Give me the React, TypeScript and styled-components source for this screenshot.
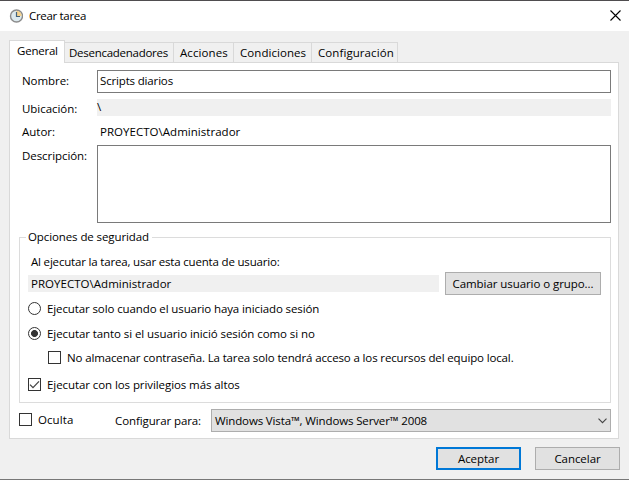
import React from 'react';
import styled, { createGlobalStyle } from 'styled-components';

const GlobalStyle = createGlobalStyle`
  * { box-sizing: border-box; }
  body {
    margin: 0;
    overflow: hidden;
    color: #000;
    background: #f0f0f0;
    font: 11.5px/16px "Open Sans", "Noto Sans", sans-serif;
  }
`;

const Window = styled.div`
  width: 629px;
  height: 480px;
  display: flex;
  flex-direction: column;
  background: #f0f0f0;
  border-top: 1px solid #4f4d4f;
  border-bottom: 1px solid #777;
`;

const TitleBar = styled.header`
  height: 30px;
  padding: 0 8px 0 9px;
  display: flex;
  align-items: center;
  gap: 6px;
  background: #fff;
`;

const CloseButton = styled.div`
  margin-left: auto;
  width: 11px;
  height: 11px;
  display: flex;
  margin-bottom: 2px;
`;

const Text = styled.span<{ $track?: number }>`
  white-space: pre;
  letter-spacing: ${({ $track = 0 }) => $track}px;
`;

const TabStrip = styled.nav`
  height: 22px;
  margin: 9px 10px 0 9px;
  display: flex;
  align-items: flex-end;
`;

const Tab = styled.div<{ $width: number; $inset: number; $active?: boolean }>`
  width: ${({ $width }) => $width}px;
  height: ${({ $active }) => ($active ? 23 : 20)}px;
  margin-bottom: ${({ $active }) => ($active ? -1 : 0)}px;
  padding: 2px 0 0 ${({ $inset }) => $inset}px;
  position: relative;
  border: 1px solid #d9d9d9;
  border-bottom: 0;
  border-left-width: ${({ $active }) => ($active ? 1 : 0)}px;
  background: ${({ $active }) => ($active ? '#fff' : '#f0f0f0')};
`;

const Panel = styled.main`
  height: 377px;
  margin: 0 10px 0 9px;
  padding: 7px 7px 0 9px;
  border: 1px solid #d9d9d9;
  background: #fff;
`;

const Field = styled.div<{ $height: number; $gap?: number }>`
  display: grid;
  grid-template-columns: 78px 1fr;
  height: ${({ $height }) => $height}px;
  margin-top: ${({ $gap = 0 }) => $gap}px;
`;

const Label = styled.label<{ $top: number }>`
  padding: ${({ $top }) => $top}px 0 0 3px;
  height: 16px;
`;

const TextBox = styled.div`
  padding: 2px 0 0 2px;
  border: 1px solid #7a7a7a;
  background: #fff;
`;

const ReadOnly = styled.div<{ $inset: number; $top?: number }>`
  height: 17px;
  padding: ${({ $top = 0 }) => $top}px 0 0 ${({ $inset }) => $inset}px;
  background: #f0f0f0;
`;

const Plain = styled.div`
  padding-left: 3px;
`;

const Group = styled.section`
  height: 166px;
  margin-top: 14px;
  padding: 0 9px 0 8px;
  border: 1px solid #dcdcdc;
`;

const Legend = styled.div`
  width: 126px;
  height: 16px;
  margin: -9px 0 0 -2px;
  padding-left: 2px;
  background: #fff;
`;

const Prompt = styled.div`
  margin-top: 9px;
  padding-left: 3px;
`;

const AccountRow = styled.div`
  height: 23px;
  margin-top: 2px;
  display: grid;
  grid-template-columns: 411px 156px;
  column-gap: 6px;
  align-items: center;
`;

const Button = styled.button<{ $primary?: boolean }>`
  height: 23px;
  padding: 0;
  font: inherit;
  color: inherit;
  background: #e1e1e1;
  border: ${({ $primary }) => ($primary ? '2px solid #0078d7' : '1px solid #adadad')};
`;

const Option = styled.div<{ $gap: number; $indent?: number }>`
  height: 17px;
  margin: ${({ $gap, $indent = 0 }) => `${$gap}px 0 0 ${$indent}px`};
  display: flex;
  align-items: center;
  gap: 6px;
`;

const RadioMark = styled.span<{ $on?: boolean }>`
  width: 13px;
  height: 13px;
  flex: none;
  border: 1px solid #333;
  border-radius: 50%;
  background: ${({ $on }) => ($on ? 'radial-gradient(circle, #333 3.1px, #fff 3.8px)' : '#fff')};
`;

const CheckMark = styled.span`
  width: 13px;
  height: 13px;
  flex: none;
  display: flex;
  border: 1px solid #333;
  background: #fff;
`;

const BottomRow = styled.div`
  height: 23px;
  margin-top: 6px;
  display: grid;
  grid-template-columns: 96px 96px 400px;
`;

const HiddenOption = styled.div`
  height: 21px;
  display: flex;
  align-items: center;
  gap: 6px;
`;

const ComboLabel = styled.div`
  padding-top: 4px;
`;

const Combo = styled.div`
  padding: 0 3px 0 3px;
  display: flex;
  align-items: center;
  justify-content: space-between;
  border: 1px solid #adadad;
  background: #e1e1e1;
`;

const Actions = styled.footer`
  margin: 8px 9px 0 0;
  display: grid;
  grid-template-columns: 85px 85px;
  column-gap: 14px;
  justify-content: end;
`;

const ClockIcon = () => (
  <svg width="14" height="14" viewBox="0 0 14 14">
    <circle cx="7.5" cy="7" r="6" fill="#dce9ee" stroke="#8b8b8b" strokeWidth="1.4" />
    <path d="M7.5 7V1.8A5.2 5.2 0 0 1 12.7 7Z" fill="#f6d28c" />
    <path d="M7.5 3v4.5H11" fill="none" stroke="#43607a" strokeWidth="1.2" />
  </svg>
);

const CloseIcon = () => (
  <svg width="11" height="11" viewBox="0 0 11 11">
    <path d="M.5.5l10 10M10.5.5l-10 10" stroke="#000" strokeWidth="1.1" />
  </svg>
);

const TickIcon = () => (
  <svg width="11" height="11" viewBox="0 0 11 11">
    <path d="M1 5.6l3 3L10 2.4" fill="none" stroke="#444" strokeWidth="1.3" />
  </svg>
);

const ChevronIcon = () => (
  <svg width="9" height="6" viewBox="0 0 9 6">
    <path d="M.5.7l4 4 4-4" fill="none" stroke="#444" strokeWidth="1.1" />
  </svg>
);

const tabs = [
  { name: 'General', width: 56, inset: 7, track: -0.22, active: true },
  { name: 'Desencadenadores', width: 109, inset: 4, track: -0.27 },
  { name: 'Acciones', width: 60, inset: 6, track: 0.1 },
  { name: 'Condiciones', width: 78, inset: 6, track: 0.06 },
  { name: 'Configuración', width: 86, inset: 6, track: 0.08 },
];

export default function App() {
  return (
    <>
      <GlobalStyle />
      <Window>
        <TitleBar>
          <ClockIcon />
          <Text $track={-0.32}>Crear tarea</Text>
          <CloseButton aria-label="Cerrar"><CloseIcon /></CloseButton>
        </TitleBar>
        <TabStrip>
          {tabs.map((t) => (
            <Tab key={t.name} $width={t.width} $inset={t.inset} $active={t.active}>
              <Text $track={t.track}>{t.name}</Text>
            </Tab>
          ))}
        </TabStrip>
        <Panel>
          <Field $height={23}>
            <Label $top={3}><Text $track={-0.05}>Nombre:</Text></Label>
            <TextBox><Text $track={-0.16}>Scripts diarios</Text></TextBox>
          </Field>
          <Field $height={17} $gap={6}>
            <Label $top={2}><Text $track={-0.04}>Ubicación:</Text></Label>
            <ReadOnly $inset={0}>\</ReadOnly>
          </Field>
          <Field $height={16} $gap={8}>
            <Label $top={0}><Text>Autor:</Text></Label>
            <Plain><Text $track={0.03}>PROYECTO\Administrador</Text></Plain>
          </Field>
          <Field $height={78} $gap={5}>
            <Label $top={3}><Text $track={-0.07}>Descripción:</Text></Label>
            <TextBox />
          </Field>
          <Group>
            <Legend><Text $track={-0.1}>Opciones de seguridad</Text></Legend>
            <Prompt><Text $track={-0.18}>Al ejecutar la tarea, usar esta cuenta de usuario:</Text></Prompt>
            <AccountRow>
              <ReadOnly $inset={3} $top={1}><Text $track={0.03}>PROYECTO\Administrador</Text></ReadOnly>
              <Button><Text $track={-0.07}>Cambiar usuario o grupo...</Text></Button>
            </AccountRow>
            <Option $gap={5}>
              <RadioMark />
              <Text $track={-0.11}>Ejecutar solo cuando el usuario haya iniciado sesión</Text>
            </Option>
            <Option $gap={8}>
              <RadioMark $on />
              <Text $track={-0.08}>Ejecutar tanto si el usuario inició sesión como si no</Text>
            </Option>
            <Option $gap={7} $indent={20}>
              <CheckMark />
              <Text $track={-0.135}>No almacenar contraseña. La tarea solo tendrá acceso a los recursos del equipo local.</Text>
            </Option>
            <Option $gap={10}>
              <CheckMark><TickIcon /></CheckMark>
              <Text $track={-0.08}>Ejecutar con los privilegios más altos</Text>
            </Option>
          </Group>
          <BottomRow>
            <HiddenOption>
              <CheckMark />
              <Text $track={0.08}>Oculta</Text>
            </HiddenOption>
            <ComboLabel><Text $track={-0.1}>Configurar para:</Text></ComboLabel>
            <Combo>
              <Text $track={-0.13}>Windows Vista™, Windows Server™ 2008</Text>
              <ChevronIcon />
            </Combo>
          </BottomRow>
        </Panel>
        <Actions>
          <Button $primary><Text $track={-0.05}>Aceptar</Text></Button>
          <Button><Text $track={-0.05}>Cancelar</Text></Button>
        </Actions>
      </Window>
    </>
  );
}
